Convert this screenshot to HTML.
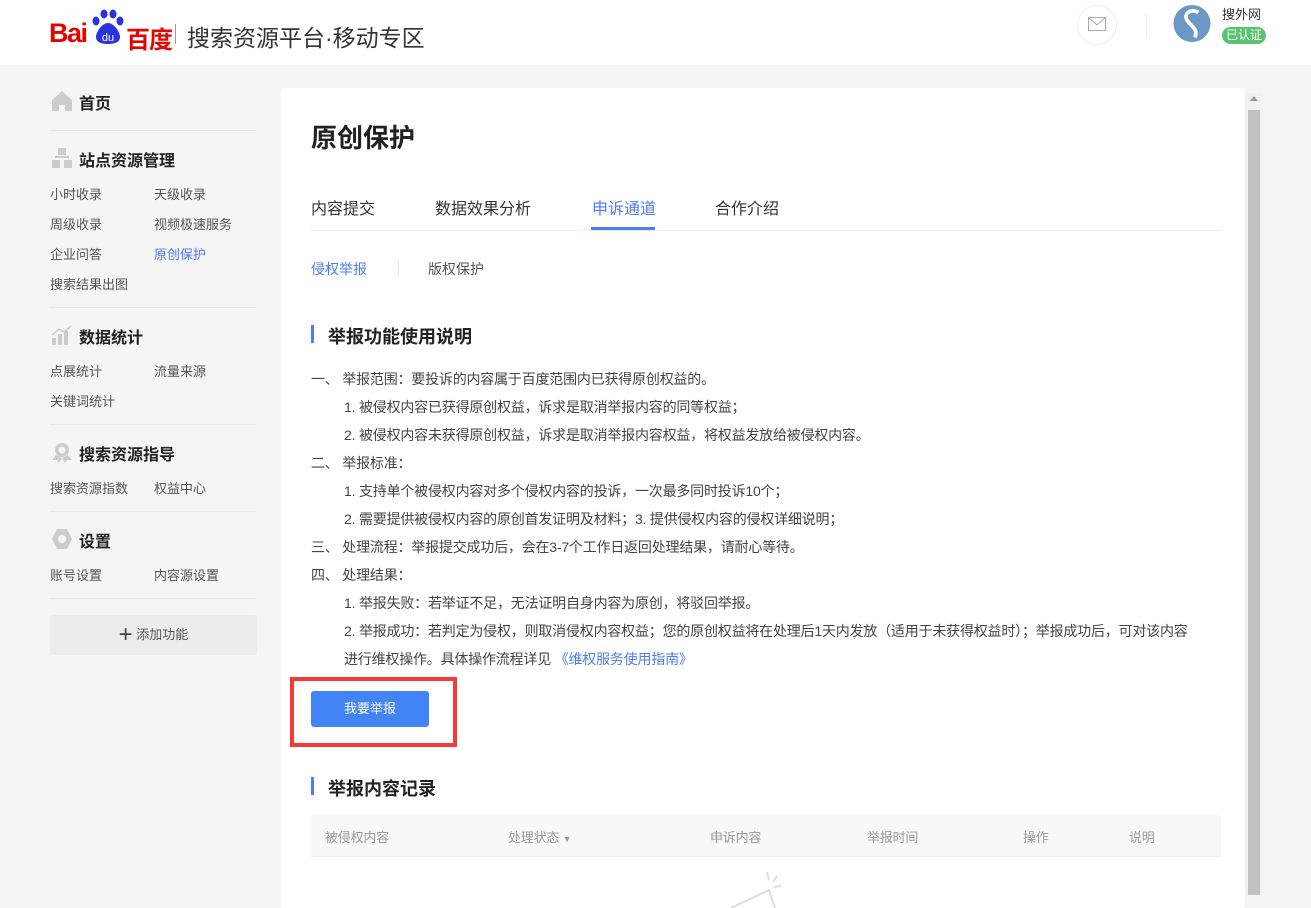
<!DOCTYPE html>
<html><head><meta charset="utf-8"><style>
*{margin:0;padding:0;box-sizing:border-box}
body{width:1311px;height:895px;overflow:hidden;background:#f5f5f5;font-family:"Liberation Sans","Noto Sans CJK SC",sans-serif;color:#333;position:relative}
.hd{position:absolute;left:0;top:0;width:1311px;height:65px;background:#fff}
.abs{position:absolute;white-space:nowrap}
.side a{position:absolute;font-size:13px;color:#555;white-space:nowrap}
.side h3{position:absolute;font-size:16px;font-weight:bold;color:#222;white-space:nowrap}
.side .ln{position:absolute;left:50px;width:206px;height:1px;background:#e8e8e8}
.main{position:absolute;left:281px;top:88px;width:964px;height:820px;background:#fff;border-radius:3px}
.p{position:absolute;font-size:14px;color:#444;white-space:nowrap;letter-spacing:-0.2px}
</style></head><body>
<div class="hd">
 <div class="abs" style="left:49px;top:18px;font-size:27px;font-weight:bold;color:#e10602;letter-spacing:-1.5px">Bai</div>
 <svg class="abs" style="left:88px;top:8px" width="40" height="40" viewBox="0 0 40 40"><g fill="#2932e1"><ellipse cx="8" cy="13" rx="3.5" ry="4.5"/><ellipse cx="16" cy="6" rx="3.5" ry="4.5"/><ellipse cx="25" cy="6" rx="3.5" ry="4.5"/><ellipse cx="32" cy="13" rx="3.5" ry="4.5"/><path d="M20 15c-6 0-12 9-12 14s5 7 12 7 12-2 12-7-6-14-12-14z"/></g><text x="20" y="33" font-size="11" fill="#fff" text-anchor="middle" font-family="Liberation Sans">du</text></svg>
 <div class="abs" style="left:126px;top:20px;font-size:24px;font-weight:bold;color:#e10602;letter-spacing:-1px">百度</div>
 <div class="abs" style="left:175px;top:24px;width:1px;height:20px;background:#999"></div>
 <div class="abs" style="left:187px;top:19px;font-size:23px;color:#333">搜索资源平台·移动专区</div>
 <div class="abs" style="left:1077px;top:5px;width:40px;height:40px;border:1px solid #eee;border-radius:50%"></div>
 <svg class="abs" style="left:1088px;top:17px" width="18" height="14" viewBox="0 0 18 14"><rect x="0.5" y="0.5" width="17" height="13" fill="none" stroke="#aaa"/><path d="M0.5 0.5L9 8 17.5 0.5" fill="none" stroke="#aaa"/></svg>
 <div class="abs" style="left:1146px;top:14px;width:1px;height:24px;background:#eee"></div>
 <svg class="abs" style="left:1172px;top:5px" width="40" height="37" viewBox="0 0 40 40"><circle cx="20" cy="20" r="20" fill="#6b98c6"/><path d="M27 8C18 3 10 10 15 17s12 9 8 18" fill="none" stroke="#fff" stroke-width="4"/></svg>
 <div class="abs" style="left:1222px;top:4px;font-size:13px;color:#333">搜外网</div>
 <div class="abs" style="left:1222px;top:27px;width:44px;height:17px;background:#5ac36e;border-radius:9px;color:#fff;font-size:12px;line-height:17px;text-align:center">已认证</div>
</div>
<div class="side">
 <svg class="abs" style="left:51px;top:90px" width="22" height="22" viewBox="0 0 22 22"><path d="M11 1L1 10v11h7v-6h6v6h7V10z" fill="#ccc"/></svg>
 <h3 style="left:79px;top:90px">首页</h3>
 <div class="ln" style="top:130px"></div>
 <svg class="abs" style="left:51px;top:147px" width="22" height="22" viewBox="0 0 22 22"><g fill="#ccc"><rect x="7" y="1" width="8" height="7"/><rect x="1" y="13" width="8" height="8"/><rect x="13" y="13" width="8" height="8"/><rect x="4" y="9" width="14" height="2"/></g></svg>
 <h3 style="left:79px;top:147px">站点资源管理</h3>
 <a style="left:50px;top:184px">小时收录</a><a style="left:154px;top:184px">天级收录</a>
 <a style="left:50px;top:214px">周级收录</a><a style="left:154px;top:214px">视频极速服务</a>
 <a style="left:50px;top:244px">企业问答</a><a style="left:154px;top:244px;color:#4e7cf2">原创保护</a>
 <a style="left:50px;top:274px">搜索结果出图</a>
 <div class="ln" style="top:307px"></div>
 <svg class="abs" style="left:51px;top:325px" width="22" height="20" viewBox="0 0 22 20"><g fill="#ccc"><rect x="1" y="13" width="4" height="7"/><rect x="7" y="9" width="4" height="11"/><rect x="13" y="6" width="4" height="14"/><path d="M1 10L8 4l5 3 7-6" stroke="#ccc" stroke-width="1.5" fill="none"/></g></svg>
 <h3 style="left:79px;top:324px">数据统计</h3>
 <a style="left:50px;top:361px">点展统计</a><a style="left:154px;top:361px">流量来源</a>
 <a style="left:50px;top:391px">关键词统计</a>
 <div class="ln" style="top:424px"></div>
 <svg class="abs" style="left:51px;top:441px" width="22" height="22" viewBox="0 0 22 22"><circle cx="11" cy="9" r="7" fill="#ccc"/><circle cx="11" cy="9" r="3.5" fill="#f5f5f5"/><path d="M5 14l-4 5h5l2 3 3-5zM17 14l4 5h-5l-2 3-3-5z" fill="#ccc"/></svg>
 <h3 style="left:79px;top:441px">搜索资源指导</h3>
 <a style="left:50px;top:478px">搜索资源指数</a><a style="left:154px;top:478px">权益中心</a>
 <div class="ln" style="top:511px"></div>
 <svg class="abs" style="left:51px;top:528px" width="22" height="22" viewBox="0 0 22 22"><path d="M6 1h10l5 10-5 10H6L1 11z" fill="#ccc"/><circle cx="11" cy="11" r="4" fill="#f5f5f5"/></svg>
 <h3 style="left:79px;top:528px">设置</h3>
 <a style="left:50px;top:565px">账号设置</a><a style="left:154px;top:565px">内容源设置</a>
 <div class="ln" style="top:598px"></div>
 <div class="abs" style="left:50px;top:615px;width:207px;height:40px;background:#ececec;border-radius:3px;font-size:13px;color:#555;line-height:40px;text-align:center"><span style="font-size:24px;vertical-align:-3px;color:#444">+</span> 添加功能</div>
</div>
<div class="main">
 <div class="abs" style="left:30px;top:30px;font-size:26px;font-weight:bold;color:#222">原创保护</div>
 <div class="abs" style="left:30px;top:107px;font-size:16px;color:#333">内容提交</div>
 <div class="abs" style="left:154px;top:107px;font-size:16px;color:#333">数据效果分析</div>
 <div class="abs" style="left:311px;top:107px;font-size:16px;color:#4e7cf2">申诉通道</div>
 <div class="abs" style="left:434px;top:107px;font-size:16px;color:#333">合作介绍</div>
 <div class="abs" style="left:30px;top:142px;width:910px;height:1px;background:#eee"></div>
 <div class="abs" style="left:310px;top:139px;width:64px;height:3px;background:#4e7cf2"></div>
 <div class="abs" style="left:30px;top:171px;font-size:14px;color:#4e7cf2">侵权举报</div>
 <div class="abs" style="left:117px;top:173px;width:1px;height:14px;background:#e5e5e5"></div>
 <div class="abs" style="left:147px;top:171px;font-size:14px;color:#555">版权保护</div>
 <div class="abs" style="left:30px;top:237px;width:3px;height:18px;background:#4e7cf2"></div>
 <div class="abs" style="left:47px;top:235px;font-size:18px;font-weight:bold;color:#222">举报功能使用说明</div>
 <div class="p" style="left:30px;top:281px">一、 举报范围：要投诉的内容属于百度范围内已获得原创权益的。</div>
 <div class="p" style="left:63px;top:309px">1. 被侵权内容已获得原创权益，诉求是取消举报内容的同等权益；</div>
 <div class="p" style="left:63px;top:337px">2. 被侵权内容未获得原创权益，诉求是取消举报内容权益，将权益发放给被侵权内容。</div>
 <div class="p" style="left:30px;top:365px">二、 举报标准：</div>
 <div class="p" style="left:63px;top:393px">1. 支持单个被侵权内容对多个侵权内容的投诉，一次最多同时投诉10个；</div>
 <div class="p" style="left:63px;top:421px">2. 需要提供被侵权内容的原创首发证明及材料；3. 提供侵权内容的侵权详细说明；</div>
 <div class="p" style="left:30px;top:449px">三、 处理流程：举报提交成功后，会在3-7个工作日返回处理结果，请耐心等待。</div>
 <div class="p" style="left:30px;top:477px">四、 处理结果：</div>
 <div class="p" style="left:63px;top:505px">1. 举报失败：若举证不足，无法证明自身内容为原创，将驳回举报。</div>
 <div class="p" style="left:63px;top:533px">2. 举报成功：若判定为侵权，则取消侵权内容权益；您的原创权益将在处理后1天内发放（适用于未获得权益时）；举报成功后，可对该内容</div>
 <div class="p" style="left:63px;top:561px">进行维权操作。具体操作流程详见 <span style="color:#4e7cf2">《维权服务使用指南》</span></div>
 <div class="abs" style="left:9px;top:589px;width:167px;height:70px;border:4px solid #f33b3b"></div>
 <div class="abs" style="left:30px;top:603px;width:118px;height:36px;background:#4283f5;border-radius:3px;color:#fff;font-size:13px;line-height:36px;text-align:center">我要举报</div>
 <div class="abs" style="left:30px;top:689px;width:3px;height:18px;background:#4e7cf2"></div>
 <div class="abs" style="left:47px;top:687px;font-size:18px;font-weight:bold;color:#222">举报内容记录</div>
 <div class="abs" style="left:30px;top:727px;width:910px;height:42px;background:#f8f8f8;border-bottom:1px solid #eee"></div>
 <div class="p" style="left:44px;top:739px;color:#999;font-size:13px">被侵权内容</div>
 <div class="p" style="left:227px;top:739px;color:#999;font-size:13px">处理状态 <span style="font-size:9px">▼</span></div>
 <div class="p" style="left:429px;top:739px;color:#999;font-size:13px">申诉内容</div>
 <div class="p" style="left:586px;top:739px;color:#999;font-size:13px">举报时间</div>
 <div class="p" style="left:742px;top:739px;color:#999;font-size:13px">操作</div>
 <div class="p" style="left:848px;top:739px;color:#999;font-size:13px">说明</div>
 <svg class="abs" style="left:440px;top:780px" width="70" height="40" viewBox="0 0 70 40"><g stroke="#ddd" stroke-width="2" fill="none"><path d="M10 40L48 22l6 18"/><path d="M46 4l2 8M56 8l-4 6M60 18l-7 1"/></g></svg>
</div>
<div class="abs" style="left:1245px;top:93px;width:18px;height:802px;background:#f1f1f1"></div>
<div class="abs" style="left:1248px;top:110px;width:12px;height:785px;background:#c1c1c1"></div>
<div class="abs" style="left:1250px;top:96px;width:0;height:0;border-left:4px solid transparent;border-right:4px solid transparent;border-bottom:5px solid #999"></div>
</body></html>
